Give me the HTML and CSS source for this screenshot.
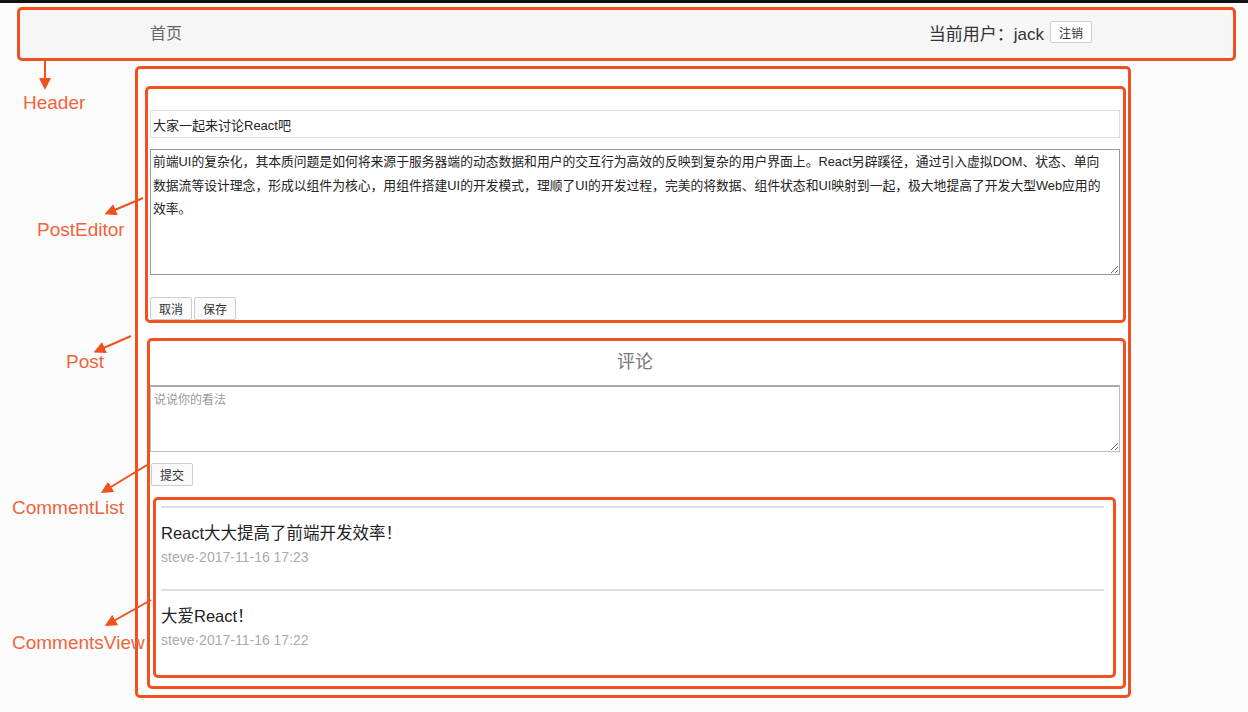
FILE: index.html
```html
<!DOCTYPE html>
<html lang="zh-CN">
<head>
    <meta charset="UTF-8">
    <title>React 组件划分</title>
    <link rel="stylesheet" href="styles.css">
</head>
<body>
    <div class="topline"></div>

    <div class="header">
        <span class="home">首页</span>
        <div class="user">
            <span>当前用户：jack</span>
            <button class="btn">注销</button>
        </div>
    </div>

    <div class="post">
        <div class="post-editor">
            <input class="title-input" type="text" value="大家一起来讨论React吧">
            <textarea class="content-input">前端UI的复杂化，其本质问题是如何将来源于服务器端的动态数据和用户的交互行为高效的反映到复杂的用户界面上。React另辟蹊径，通过引入虚拟DOM、状态、单向
数据流等设计理念，形成以组件为核心，用组件搭建UI的开发模式，理顺了UI的开发过程，完美的将数据、组件状态和UI映射到一起，极大地提高了开发大型Web应用的
效率。</textarea>
            <div class="actions">
                <button class="btn">取消</button>
                <button class="btn">保存</button>
            </div>
        </div>

        <div class="comments">
            <div class="comments-title">评论</div>
            <textarea class="comment-input" placeholder="说说你的看法"></textarea>
            <button class="btn submit">提交</button>

            <div class="comment-list">
                <div class="comment">
                    <div class="comment-text">React大大提高了前端开发效率！</div>
                    <div class="comment-meta">steve·2017-11-16 17:23</div>
                </div>
                <div class="comment">
                    <div class="comment-text">大爱React！</div>
                    <div class="comment-meta">steve·2017-11-16 17:22</div>
                </div>
            </div>
        </div>
    </div>

    <!-- annotations -->
    <div class="label" style="left:23px; top:91px;">Header</div>
    <div class="label" style="left:37px; top:218px;">PostEditor</div>
    <div class="label" style="left:66px; top:350px;">Post</div>
    <div class="label" style="left:12px; top:496px;">CommentList</div>
    <div class="label" style="left:12px; top:631px;">CommentsView</div>

    <svg class="arrows" width="1248" height="712" viewBox="0 0 1248 712">
        <defs>
            <marker id="head" markerWidth="6" markerHeight="6" refX="3" refY="3" orient="auto">
                <path d="M0,0 L6,3 L0,6 Z" fill="#f2501e"/>
            </marker>
        </defs>
        <g stroke="#f2501e" stroke-width="2" fill="none">
            <line x1="45" y1="61" x2="45" y2="84" marker-end="url(#head)"/>
            <line x1="143" y1="198" x2="110" y2="212" marker-end="url(#head)"/>
            <line x1="131" y1="336" x2="99" y2="350" marker-end="url(#head)"/>
            <line x1="147" y1="465" x2="106" y2="490" marker-end="url(#head)"/>
            <line x1="151" y1="600" x2="110" y2="623" marker-end="url(#head)"/>
        </g>
    </svg>
</body>
</html>
```

FILE: styles.css
```css
body {
    margin: 0;
    background: #fcfcfc;
    font-family: "Liberation Sans", "Noto Sans CJK SC", sans-serif;
    color: #333;
    position: relative;
    width: 1248px;
    height: 712px;
    overflow: hidden;
}
.topline {
    height: 3px;
    background: #111;
}
.header {
    margin: 4px 0 0 17px;
    width: 1219px;
    height: 54px;
    box-sizing: border-box;
    border: 3px solid #f2501e;
    border-radius: 5px;
    background: #f6f6f6;
    display: flex;
    align-items: center;
    justify-content: space-between;
    padding: 0 141px 4px 130px;
}
.home {
    font-size: 16px;
    color: #666;
}
.user {
    display: flex;
    align-items: center;
    gap: 6px;
    font-size: 17px;
    color: #333;
}
.btn {
    font-family: "Liberation Sans", "Noto Sans CJK SC", sans-serif;
    font-size: 12px;
    height: 23px;
    padding: 0 8px;
    background: #fafafa;
    border: 1px solid #ccc;
    border-radius: 2px;
    color: #333;
}
.user .btn {
    height: 22px;
    background: #fff;
}
.post {
    margin: 5px 0 0 135px;
    width: 996px;
    box-sizing: border-box;
    border: 3px solid #f2501e;
    border-radius: 5px;
    background: #fff;
    padding: 17px 2px 6px 7px;
}
.post-editor {
    border: 3px solid #f2501e;
    border-radius: 5px;
    padding: 21px 3px 0 2px;
}
.title-input {
    display: block;
    width: 100%;
    height: 28px;
    box-sizing: border-box;
    border: 1px solid #ddd;
    padding: 0 2px;
    font-family: "Liberation Sans", "Noto Sans CJK SC", sans-serif;
    font-size: 13px;
    color: #222;
    margin-bottom: 11px;
}
.content-input {
    display: block;
    width: 100%;
    height: 126px;
    box-sizing: border-box;
    border: 1px solid #999;
    padding: 0 2px;
    font-family: "Liberation Sans", "Noto Sans CJK SC", sans-serif;
    font-size: 12.8px;
    line-height: 23.5px;
    color: #222;
    overflow: hidden;
}
.actions {
    display: flex;
    gap: 2px;
    margin-top: 22px;
}
.comments {
    margin: 15px 0 0 2px;
    border: 3px solid #f2501e;
    border-radius: 5px;
    padding: 8px 3px 8px 0;
}
.comments-title {
    text-align: center;
    font-size: 18px;
    line-height: 26px;
    color: #777;
}
.comment-input {
    display: block;
    width: 100%;
    height: 67px;
    box-sizing: border-box;
    margin-top: 10px;
    border: 1px solid #bbb;
    border-top: 2px solid #aaa;
    padding: 3px 3px;
    font-family: "Liberation Sans", "Noto Sans CJK SC", sans-serif;
    font-size: 12px;
    line-height: 20px;
    resize: vertical;
}
.comment-input::placeholder {
    color: #999;
}
.submit {
    display: block;
    margin: 11px 0 0 1px;
}
.comment-list {
    margin: 11px 4px 0 3px;
    border: 3px solid #f2501e;
    border-radius: 5px;
    padding: 6px 9px 3px 5px;
}
.comment {
    border-top: 2px solid #ddd;
    padding: 14px 0 22px 0;
}
.comment-text {
    font-size: 16.5px;
    line-height: 22px;
    color: #222;
}
.comment-meta {
    margin-top: 3px;
    font-size: 14px;
    line-height: 20px;
    color: #aaa;
}
.label {
    position: absolute;
    font-size: 19px;
    line-height: 24px;
    color: #f0643c;
}
.arrows {
    position: absolute;
    left: 0;
    top: 0;
    pointer-events: none;
}
```
